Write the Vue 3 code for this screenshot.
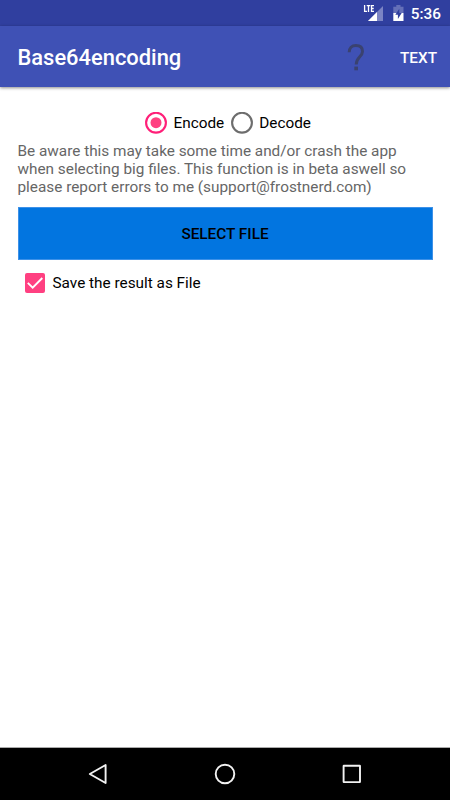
<script setup>
import { ref } from 'vue'

const mode = ref('Encode')
const modes = ['Encode', 'Decode']
const saveAsFile = ref(true)
</script>

<template>
  <div class="screen">
    <div class="status">
      <svg class="signal" width="22" height="20" viewBox="0 0 22 20">
        <path d="M20 2V17H5Z" fill="#7b84c4" />
        <path d="M14 8V17H5Z" fill="#fff" />
        <path d="M0 0H12V8.500H0Z" fill="#303f9f" />
        <g fill="none" stroke="#fff" stroke-width="1.3">
          <path d="M1.600 1V7.400H4" />
          <path d="M3.700 1.600H7.300M5.500 1.600V8" />
          <path d="M11 1.600H8.500V7.400H11M8.500 4.500H10.700" />
        </g>
      </svg>
      <svg class="battery" width="11" height="17" viewBox="0 0 11 17">
        <path d="M3.300 0H7.500V1.700H10.500V8H.3V1.700H3.300Z" fill="#6570b8" />
        <path d="M.3 8H10.500V16H.3Z" fill="#fff" />
        <path d="M6.300 3.800L2.300 9.700H4.900V14L8.700 8.100H6.300Z" fill="#303f9f" />
      </svg>
      <span class="clock">5:36</span>
    </div>

    <header class="toolbar">
      <h1 class="title">Base64encoding</h1>
      <svg class="help" width="18" height="28" viewBox="0 0 18 28">
        <path d="M2.200 9.300C2.200 5 4.800 2.600 8.900 2.600C13.200 2.600 15.500 5 15.500 8.500C15.500 13.600 9.200 14.300 9.200 21.500" fill="none" stroke="#3a4270" stroke-width="3" />
        <path d="M7.300 23.600H11V27.300H7.300Z" fill="#3a4270" />
      </svg>
      <span class="action">TEXT</span>
    </header>

    <main class="content">
      <div class="radios">
        <div v-for="m in modes" :key="m" class="radio" @click="mode = m">
          <svg width="22" height="22" viewBox="0 0 22 22">
            <circle cx="11" cy="10.700" r="9.900" fill="none" stroke-width="2.100" :stroke="mode === m ? '#ff1f78' : '#6d6d6d'" />
            <circle v-if="mode === m" cx="11" cy="10.700" r="5.500" fill="#ff4081" />
          </svg>
          <span>{{ m }}</span>
        </div>
      </div>
      <p class="notice">
        <span>Be aware this may take some time and/or crash the app</span>
        <span>when selecting big files. This function is in beta aswell so</span>
        <span>please report errors to me (support@frostnerd.com)</span>
      </p>
      <button class="select">SELECT FILE</button>
      <div class="check" @click="saveAsFile = !saveAsFile">
        <svg width="20" height="20" viewBox="0 0 20 20">
          <rect width="20" height="20" rx="2" :fill="saveAsFile ? '#ff4081' : '#fff'" />
          <path v-if="saveAsFile" d="M2.800 9.900L7.700 14.700L17.300 5" fill="none" stroke="#fff" stroke-width="1.900" />
        </svg>
        <span>Save the result as File</span>
      </div>
    </main>

    <nav class="nav">
      <svg width="22" height="22" viewBox="0 0 22 22"><path d="M18.600 2V20L2.800 11Z" /></svg>
      <svg width="22" height="22" viewBox="0 0 22 22"><circle cx="11" cy="11" r="9.300" /></svg>
      <svg width="22" height="22" viewBox="0 0 22 22"><rect x="2.600" y="2.700" width="16.400" height="16.400" rx=".3" /></svg>
    </nav>
  </div>
</template>

<style>
body { margin: 0; }
</style>

<style scoped>
.screen {
  display: flex;
  flex-direction: column;
  width: 450px;
  height: 800px;
  overflow: hidden;
  background: #fff;
  color: #000;
  font-family: Roboto, sans-serif;
  font-size: 15.330px;
}
svg { display: block; flex: none; }
.status {
  display: flex;
  align-items: flex-start;
  justify-content: flex-end;
  box-sizing: border-box;
  height: 26px;
  padding: 4px 9px 0 0;
  background: #303f9f;
}
.signal { margin-right: 8px; }
.battery { margin: 1px 7px 0 0; }
.clock {
  color: #fff;
  font-size: 15.330px;
  font-weight: 500;
  line-height: 20px;
}
.toolbar {
  display: flex;
  align-items: center;
  box-sizing: border-box;
  height: 61px;
  padding: 1px 13px 0 17.500px;
  background: #3f51b5;
  box-shadow: 0 1px 3px rgba(0, 0, 0, .45);
}
.title {
  flex: 1;
  margin: 0;
  color: #fff;
  font-size: 21.900px;
  font-weight: 500;
  line-height: 26px;
  padding-top: 1px;
}
.help { margin-right: 35px; }
.action {
  color: #fff;
  font-weight: 500;
  padding-top: 1px;
}
.content {
  flex: 1;
  padding: 25px 17.500px 0;
}
.radios {
  display: flex;
  justify-content: center;
  gap: 6.500px;
  padding-left: 6px;
}
.radio {
  display: flex;
  align-items: center;
  gap: 6.500px;
}
.notice {
  margin: 9px 0 0;
  color: #666;
  line-height: 17.800px;
}
.notice span {
  display: block;
  white-space: nowrap;
}
.select {
  display: block;
  width: 100%;
  height: 53px;
  margin-top: 11px;
  padding: 0;
  border: 1px solid #3d91e8;
  background: #0275e0;
  color: #000;
  font-family: inherit;
  font-size: 15.330px;
  font-weight: 500;
}
.check {
  display: flex;
  align-items: center;
  gap: 7.500px;
  padding: 13px 0 0 7.500px;
}
.nav {
  display: flex;
  align-items: center;
  justify-content: center;
  gap: 105px;
  box-sizing: border-box;
  height: 53px;
  border-top: 1px solid #aaa;
  background: #000;
}
.nav svg {
  fill: none;
  stroke: #f2f2f2;
  stroke-width: 1.900px;
  stroke-linejoin: round;
}
</style>
